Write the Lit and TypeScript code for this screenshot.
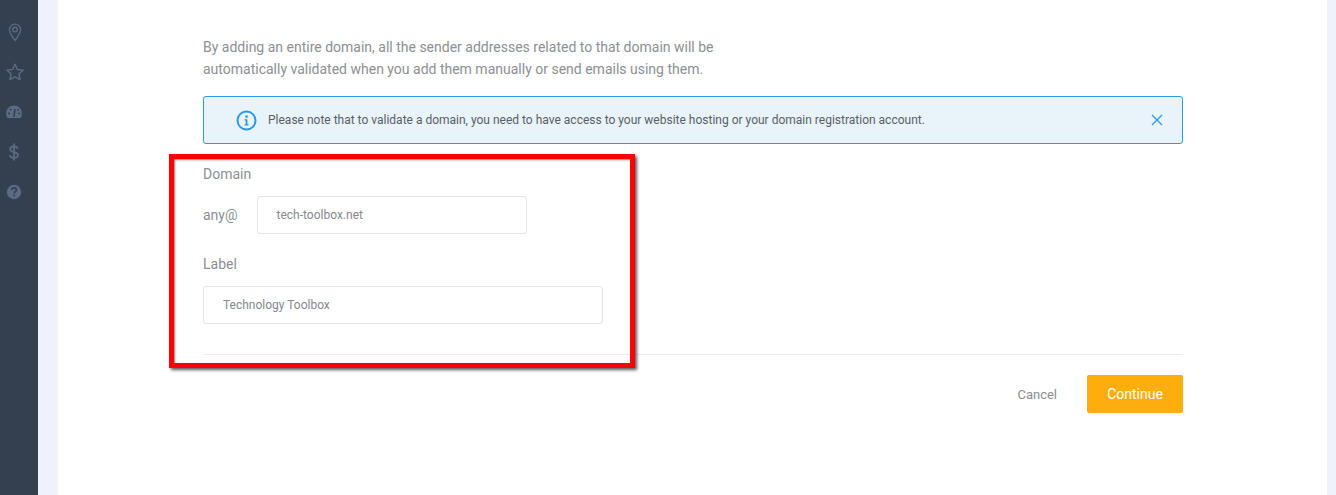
import { LitElement, html, css } from 'lit';
import { customElement } from 'lit/decorators.js';

@customElement('app-root')
export class AppRoot extends LitElement {
  static styles = css`
    :host {
      display: flex;
      height: 495px;
      overflow: hidden;
      background: #eff2fa;
      font-family: Roboto, "Liberation Sans", sans-serif;
      color: #8a8d93;
      position: relative;
    }
    .sidebar {
      width: 38px;
      flex: none;
      background: #343f4f;
      display: flex;
      flex-direction: column;
      padding-top: 22px;
      box-sizing: border-box;
    }
    .nav-icon {
      height: 40px;
      width: 30px;
      display: flex;
      justify-content: center;
      color: #5b6b84;
    }
    .nav-icon svg {
      width: 20px;
      height: 20px;
    }
    .panel {
      margin-left: 20px;
      width: 1269px;
      flex: none;
      background: #fff;
      padding: 36px 144px 0 145px;
      box-sizing: border-box;
    }
    .intro {
      margin: 0;
      font-size: 14px;
      line-height: 22px;
      height: 46px;
      color: #8c8f94;
    }
    .alert {
      margin-top: 14px;
      height: 48px;
      box-sizing: border-box;
      border: 1px solid #2e97e6;
      border-radius: 3px;
      background: #e8f3fa;
      display: flex;
      align-items: center;
      padding: 0 19px 0 32px;
      gap: 11px;
      font-size: 12px;
      color: #5a5f66;
    }
    .alert .msg {
      flex: 1;
    }
    .field-label {
      font-size: 14px;
      line-height: 20px;
      color: #8c8f94;
    }
    .domain-label {
      margin-top: 20px;
    }
    .domain-row {
      display: flex;
      align-items: center;
      margin-top: 12px;
      gap: 19px;
      font-size: 14px;
      color: #8c8f94;
    }
    .input {
      height: 38px;
      box-sizing: border-box;
      border: 1px solid #e3e4e6;
      border-radius: 3px;
      padding: 0 19px;
      display: flex;
      align-items: center;
      font-size: 12px;
      color: #85888e;
      background: #fff;
    }
    .domain-row .input {
      width: 270px;
    }
    .label-label {
      margin-top: 20px;
    }
    .label-input {
      width: 400px;
      margin-top: 12px;
    }
    .divider {
      height: 1px;
      background: #ececec;
      margin-top: 30px;
    }
    .actions {
      display: flex;
      justify-content: flex-end;
      align-items: center;
      margin-top: 20px;
      gap: 30px;
    }
    .cancel {
      font-size: 13px;
      color: #8a8d93;
    }
    .continue {
      width: 96px;
      height: 38px;
      background: #ffad0d;
      border-radius: 2px;
      color: #fff;
      font-size: 14px;
      display: flex;
      align-items: center;
      justify-content: center;
    }
    .highlight {
      position: absolute;
      left: 169px;
      top: 154px;
      width: 466px;
      height: 214px;
      box-sizing: border-box;
      border: 5px solid #fe0000;
      box-shadow: 2px 2px 3px rgba(0, 0, 0, 0.65), inset 1px 1px 2px rgba(0, 0, 0, 0.5);
    }
  `;

  render() {
    return html`
      <div class="sidebar">
        <div class="nav-icon">
          <svg viewBox="0 0 20 20" fill="none" stroke="currentColor" stroke-width="1.4">
            <path d="M10 18.5c-3.2-4.4-5.6-7.6-5.6-10.8a5.6 5.6 0 0 1 11.2 0c0 3.2-2.4 6.4-5.6 10.8z" />
            <circle cx="10" cy="7.6" r="2.3" />
          </svg>
        </div>
        <div class="nav-icon">
          <svg viewBox="0 0 20 20" fill="none" stroke="currentColor" stroke-width="1.4" stroke-linejoin="round">
            <path d="M10 2.2l2.4 5.3 5.8.6-4.3 3.9 1.2 5.7L10 14.8l-5.1 2.9 1.2-5.7-4.3-3.9 5.8-.6z" />
          </svg>
        </div>
        <div class="nav-icon">
          <svg viewBox="0 0 20 20" fill="currentColor">
            <path d="M9 3.5a8 8 0 0 0-8 8c0 1.6.4 3 1 4.1.2.3.4.4.7.4h12.6c.3 0 .5-.1.7-.4.6-1.1 1-2.5 1-4.1a8 8 0 0 0-8-8z" />
            <path d="M9 15l.9-8" stroke="#343f4f" stroke-width="1.6" />
            <circle cx="4" cy="11.5" r="1" fill="#343f4f" />
            <circle cx="5.5" cy="7.5" r="1" fill="#343f4f" />
            <circle cx="13" cy="8" r="1" fill="#343f4f" />
            <circle cx="14.2" cy="11.5" r="1" fill="#343f4f" />
          </svg>
        </div>
        <div class="nav-icon">
          <svg viewBox="0 0 20 20" fill="none" stroke="currentColor" stroke-width="1.8">
            <path d="M12.8 6.8C12.4 5.2 11 4.4 9 4.4c-2.3 0-3.8 1.1-3.8 2.8 0 4 7.8 1.8 7.8 5.8 0 1.7-1.7 2.8-4 2.8-2.2 0-3.7-1-4.1-2.6" />
            <path d="M9 1.5v17" />
          </svg>
        </div>
        <div class="nav-icon">
          <svg viewBox="0 0 20 20">
            <circle cx="9" cy="10" r="7.2" fill="currentColor" />
            <path d="M6.6 8c.2-1.4 1.2-2.1 2.5-2.1 1.4 0 2.4.8 2.4 2 0 1.9-2.4 1.8-2.4 3.4" fill="none" stroke="#343f4f" stroke-width="1.7" />
            <rect x="8.2" y="12.4" width="1.8" height="1.8" fill="#343f4f" />
          </svg>
        </div>
      </div>

      <div class="panel">
        <p class="intro">
          By adding an entire domain, all the sender addresses related to that domain will be<br />
          automatically validated when you add them manually or send emails using them.
        </p>

        <div class="alert">
          <svg width="21" height="21" viewBox="0 0 21 21" fill="none">
            <circle cx="10.5" cy="10.5" r="9" stroke="#2e97e6" stroke-width="2" />
            <circle cx="10.5" cy="6.6" r="1.3" fill="#2e97e6" />
            <path d="M8.6 9.2h2.8v5h1.1v1.3H8.5v-1.3h1.2v-3.7H8.6z" fill="#2e97e6" />
          </svg>
          <span class="msg">Please note that to validate a domain, you need to have access to your website hosting or your domain registration account.</span>
          <svg width="12" height="12" viewBox="0 0 12 12" fill="none" stroke="#2e97e6" stroke-width="1.3">
            <path d="M1 1l10 10M11 1L1 11" />
          </svg>
        </div>

        <div class="field-label domain-label">Domain</div>
        <div class="domain-row">
          <span>any@</span>
          <div class="input">tech-toolbox.net</div>
        </div>

        <div class="field-label label-label">Label</div>
        <div class="input label-input">Technology Toolbox</div>

        <div class="divider"></div>

        <div class="actions">
          <span class="cancel">Cancel</span>
          <div class="continue">Continue</div>
        </div>
      </div>

      <div class="highlight"></div>
    `;
  }
}
